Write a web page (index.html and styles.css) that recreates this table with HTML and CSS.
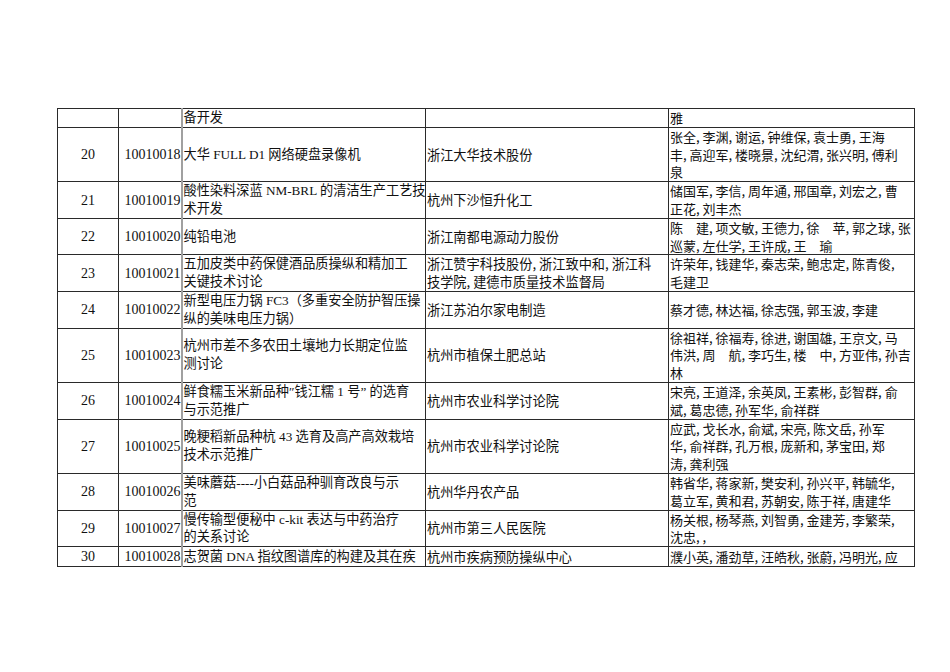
FILE: index.html
```html
<!DOCTYPE html>
<html lang="zh-CN">
<head>
<meta charset="utf-8">
<title>项目表</title>
<link rel="stylesheet" href="styles.css">
</head>
<body>
<div class="page">
<table class="grid">
<colgroup>
<col class="w1"><col class="w2"><col class="w3"><col class="w4"><col class="w5">
</colgroup>
<tbody>
<tr><td class="no"></td><td class="id"></td><td class="proj">备开发</td><td class="unit"></td><td class="people">雅</td></tr>
<tr><td class="no">20</td><td class="id">10010018</td><td class="proj">大华 FULL D1 网络硬盘录像机</td><td class="unit">浙江大华技术股份</td><td class="people">张全, 李渊, 谢运, 钟维保, 袁士勇, 王海<br>丰, 高迎军, 楼晓景, 沈纪渭, 张兴明, 傅利<br>泉</td></tr>
<tr><td class="no">21</td><td class="id">10010019</td><td class="proj">酸性染料深蓝 NM-BRL 的清洁生产工艺技<br>术开发</td><td class="unit">杭州下沙恒升化工</td><td class="people">储国军, 李信, 周年通, 邢国章, 刘宏之, 曹<br>正花, 刘丰杰</td></tr>
<tr><td class="no">22</td><td class="id">10010020</td><td class="proj">纯铅电池</td><td class="unit">浙江南都电源动力股份</td><td class="people">陈　建, 项文敏, 王德力, 徐　苹, 郭之球, 张<br>巡蒙, 左仕学, 王许成, 王　瑜</td></tr>
<tr><td class="no">23</td><td class="id">10010021</td><td class="proj">五加皮类中药保健酒品质操纵和精加工<br>关键技术讨论</td><td class="unit">浙江赞宇科技股份, 浙江致中和, 浙江科<br>技学院, 建德市质量技术监督局</td><td class="people">许荣年, 钱建华, 秦志荣, 鲍忠定, 陈青俊,<br>毛建卫</td></tr>
<tr><td class="no">24</td><td class="id">10010022</td><td class="proj">新型电压力锅 FC3（多重安全防护智压操<br>纵的美味电压力锅）</td><td class="unit">浙江苏泊尔家电制造</td><td class="people">蔡才德, 林达福, 徐志强, 郭玉波, 李建</td></tr>
<tr><td class="no">25</td><td class="id">10010023</td><td class="proj">杭州市差不多农田土壤地力长期定位监<br>测讨论</td><td class="unit">杭州市植保土肥总站</td><td class="people">徐祖祥, 徐福寿, 徐进, 谢国雄, 王京文, 马<br>伟洪, 周　航, 李巧生, 楼　中, 方亚伟, 孙吉<br>林</td></tr>
<tr><td class="no">26</td><td class="id">10010024</td><td class="proj">鲜食糯玉米新品种″钱江糯 1 号” 的选育<br>与示范推广</td><td class="unit">杭州市农业科学讨论院</td><td class="people">宋亮, 王道泽, 余英凤, 王素彬, 彭智群, 俞<br>斌, 葛忠德, 孙军华, 俞祥群</td></tr>
<tr><td class="no">27</td><td class="id">10010025</td><td class="proj">晚粳稻新品种杭 43 选育及高产高效栽培<br>技术示范推广</td><td class="unit">杭州市农业科学讨论院</td><td class="people">应武, 戈长水, 俞斌, 宋亮, 陈文岳, 孙军<br>华, 俞祥群, 孔万根, 庞新和, 茅宝田, 郑<br>涛, 龚利强</td></tr>
<tr><td class="no">28</td><td class="id">10010026</td><td class="proj">美味蘑菇----小白菇品种驯育改良与示<br>范</td><td class="unit">杭州华丹农产品</td><td class="people">韩省华, 蒋家新, 樊安利, 孙兴平, 韩毓华,<br>葛立军, 黄和君, 苏朝安, 陈于祥, 唐建华</td></tr>
<tr><td class="no">29</td><td class="id">10010027</td><td class="proj">慢传输型便秘中 c-kit 表达与中药治疗<br>的关系讨论</td><td class="unit">杭州市第三人民医院</td><td class="people">杨关根, 杨琴燕, 刘智勇, 金建芳, 李繁荣,<br>沈忠, ,</td></tr>
<tr><td class="no">30</td><td class="id">10010028</td><td class="proj">志贺菌 DNA 指纹图谱库的构建及其在疾</td><td class="unit">杭州市疾病预防操纵中心</td><td class="people">濮小英, 潘劲草, 汪皓秋, 张蔚, 冯明光, 应</td></tr>
</tbody>
</table>
</div>
</body>
</html>
```

FILE: styles.css
```css
html, body {
  margin: 0;
  padding: 0;
  background: #ffffff;
}

.page {
  padding: 108px 0 0 57px;
}

.grid {
  border-collapse: collapse;
  table-layout: fixed;
  width: 857px;
  color: #111;
  font-family: "Liberation Serif", "Noto Sans CJK SC", serif;
  font-size: 13.2px;
  line-height: 17.8px;
}

.w1 { width: 61px; }
.w2 { width: 63px; }
.w3 { width: 244px; }
.w4 { width: 243px; }
.w5 { width: 246px; }

.grid td {
  border: 1px solid #2a2a2a;
  padding: 0;
  vertical-align: middle;
  white-space: nowrap;
  overflow: hidden;
}

.grid td.no {
  text-align: center;
  font-size: 14px;
  padding-top: 1px;
}

.grid td.id {
  text-align: right;
  font-size: 14px;
  padding-right: 0;
  padding-top: 1px;
}

.grid td.proj {
  border-left: 2px solid #a0a0a0;
  padding-left: 1px;
  font-size: 13.2px;
}

.grid td.unit {
  padding-left: 1px;
  font-family: "Noto Sans CJK SC", sans-serif;
  font-size: 13.2px;
}

.grid td.people {
  padding-left: 1px;
  font-family: "Noto Sans CJK SC", sans-serif;
  font-size: 13px;
}
```
